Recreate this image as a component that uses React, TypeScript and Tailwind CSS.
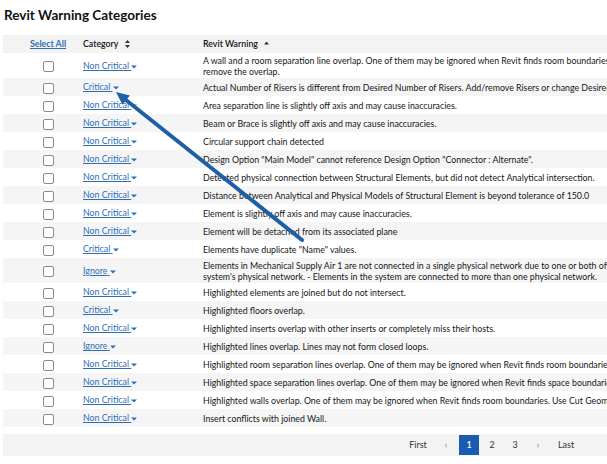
import React from "react";

type Row = { cat: "Non Critical" | "Critical" | "Ignore"; text: string[] };

const rows: Row[] = [
  {
    cat: "Non Critical",
    text: [
      "A wall and a room separation line overlap. One of them may be ignored when Revit finds room boundaries. Shorten or delete the room separation line to",
      "remove the overlap.",
    ],
  },
  {
    cat: "Critical",
    text: [
      "Actual Number of Risers is different from Desired Number of Risers. Add/remove Risers or change Desired Number of Risers in Stair properties.",
    ],
  },
  { cat: "Non Critical", text: ["Area separation line is slightly off axis and may cause inaccuracies."] },
  { cat: "Non Critical", text: ["Beam or Brace is slightly off axis and may cause inaccuracies."] },
  { cat: "Non Critical", text: ["Circular support chain detected"] },
  { cat: "Non Critical", text: ['Design Option "Main Model" cannot reference Design Option "Connector : Alternate".'] },
  {
    cat: "Non Critical",
    text: ["Detected physical connection between Structural Elements, but did not detect Analytical intersection."],
  },
  {
    cat: "Non Critical",
    text: ["Distance between Analytical and Physical Models of Structural Element is beyond tolerance of 150.0"],
  },
  { cat: "Non Critical", text: ["Element is slightly off axis and may cause inaccuracies."] },
  { cat: "Non Critical", text: ["Element will be detached from its associated plane"] },
  { cat: "Critical", text: ['Elements have duplicate "Name" values.'] },
  {
    cat: "Ignore",
    text: [
      "Elements in Mechanical Supply Air 1 are not connected in a single physical network due to one or both of the following reasons: - Some elements are not part of the",
      "system's physical network. - Elements in the system are connected to more than one physical network.",
    ],
  },
  { cat: "Non Critical", text: ["Highlighted elements are joined but do not intersect."] },
  { cat: "Critical", text: ["Highlighted floors overlap."] },
  { cat: "Non Critical", text: ["Highlighted inserts overlap with other inserts or completely miss their hosts."] },
  { cat: "Ignore", text: ["Highlighted lines overlap. Lines may not form closed loops."] },
  {
    cat: "Non Critical",
    text: ["Highlighted room separation lines overlap. One of them may be ignored when Revit finds room boundaries."],
  },
  {
    cat: "Non Critical",
    text: ["Highlighted space separation lines overlap. One of them may be ignored when Revit finds space boundaries."],
  },
  {
    cat: "Non Critical",
    text: [
      "Highlighted walls overlap. One of them may be ignored when Revit finds room boundaries. Use Cut Geometry to embed one wall within the other.",
    ],
  },
  { cat: "Non Critical", text: ["Insert conflicts with joined Wall."] },
];

const Caret = () => (
  <svg width="6" height="4" viewBox="0 0 6 4" className="inline-block">
    <path d="M0 0.5h6L3 3.5z" fill="#2f6db5" />
  </svg>
);

const App = () => {
  return (
    <div
      className="relative w-[607px] h-[464px] overflow-hidden bg-white text-[#151515]"
      style={{ fontFamily: "Lato, 'Liberation Sans', sans-serif" }}
    >
      <h1 className="pl-[4px] pt-[6px] h-[35px] text-[13.5px] leading-[18px] font-bold text-[#111]">
        Revit Warning Categories
      </h1>

      <table className="ml-[3px] w-[900px] table-fixed border-collapse text-[8.8px]">
        <colgroup>
          <col className="w-[80px]" />
          <col className="w-[117px]" />
          <col />
        </colgroup>
        <thead>
          <tr className="bg-[#f3f3f3] h-[18px]">
            <th className="pl-[10px] text-center font-bold">
              <a className="text-[#2f6db5] underline">Select All</a>
            </th>
            <th className="text-left font-semibold">
              <span className="inline-flex items-center gap-[7px]">
                Category
                <svg width="5" height="8" viewBox="0 0 5 8">
                  <path d="M0 3h5L2.5 0z M0 5h5L2.5 8z" fill="#333" />
                </svg>
              </span>
            </th>
            <th className="pl-[3px] text-left font-semibold">
              <span className="inline-flex items-center gap-[6px]">
                Revit Warning
                <svg width="5" height="4" viewBox="0 0 5 4" className="-mt-[3px]">
                  <path d="M0 3.5h5L2.5 0.5z" fill="#333" />
                </svg>
              </span>
            </th>
          </tr>
        </thead>
        <tbody>
          {rows.map((r, i) => (
            <tr key={i} className={i % 2 === 1 ? "bg-[#f5f5f5]" : "bg-white"}>
              <td className="h-[18px] pl-[10px] text-center align-middle">
                <span className="inline-block w-[11px] h-[11px] align-middle rounded-[2px] border border-[#8a8a8a] bg-white" />
              </td>
              <td className="align-middle">
                <a className="text-[#2f6db5] underline">{r.cat}&nbsp;</a>
                <Caret />
              </td>
              <td className="pl-[3px] py-[1.5px] leading-[11px] align-middle whitespace-nowrap">
                {r.text.map((t, j) => (
                  <div key={j}>{t}</div>
                ))}
              </td>
            </tr>
          ))}
        </tbody>
      </table>

      <div className="ml-[3px] mt-[7px] h-[22px] bg-[#f3f3f3] flex items-center justify-end pr-[26px] gap-[3px] text-[9px] text-[#333]">
        <span className="w-[30px] h-[20px] flex items-center justify-center">First</span>
        <span className="w-[20px] h-[20px] flex items-center justify-center text-[#777]">‹</span>
        <span className="w-[20px] h-[20px] flex items-center justify-center bg-[#1a5db0] text-white font-semibold">1</span>
        <span className="w-[20px] h-[20px] flex items-center justify-center">2</span>
        <span className="w-[20px] h-[20px] flex items-center justify-center">3</span>
        <span className="w-[20px] h-[20px] flex items-center justify-center text-[#777]">›</span>
        <span className="w-[30px] h-[20px] flex items-center justify-center">Last</span>
      </div>

      <svg className="absolute left-0 top-0 pointer-events-none" width="607" height="464">
        <line x1="124" y1="98.5" x2="302" y2="240" stroke="#1f5ea8" strokeWidth="4" strokeLinecap="round" />
        <path d="M116 92 L122.5 104.8 L129.9 95.4 Z" fill="#1f5ea8" />
      </svg>
    </div>
  );
};

export default App;
